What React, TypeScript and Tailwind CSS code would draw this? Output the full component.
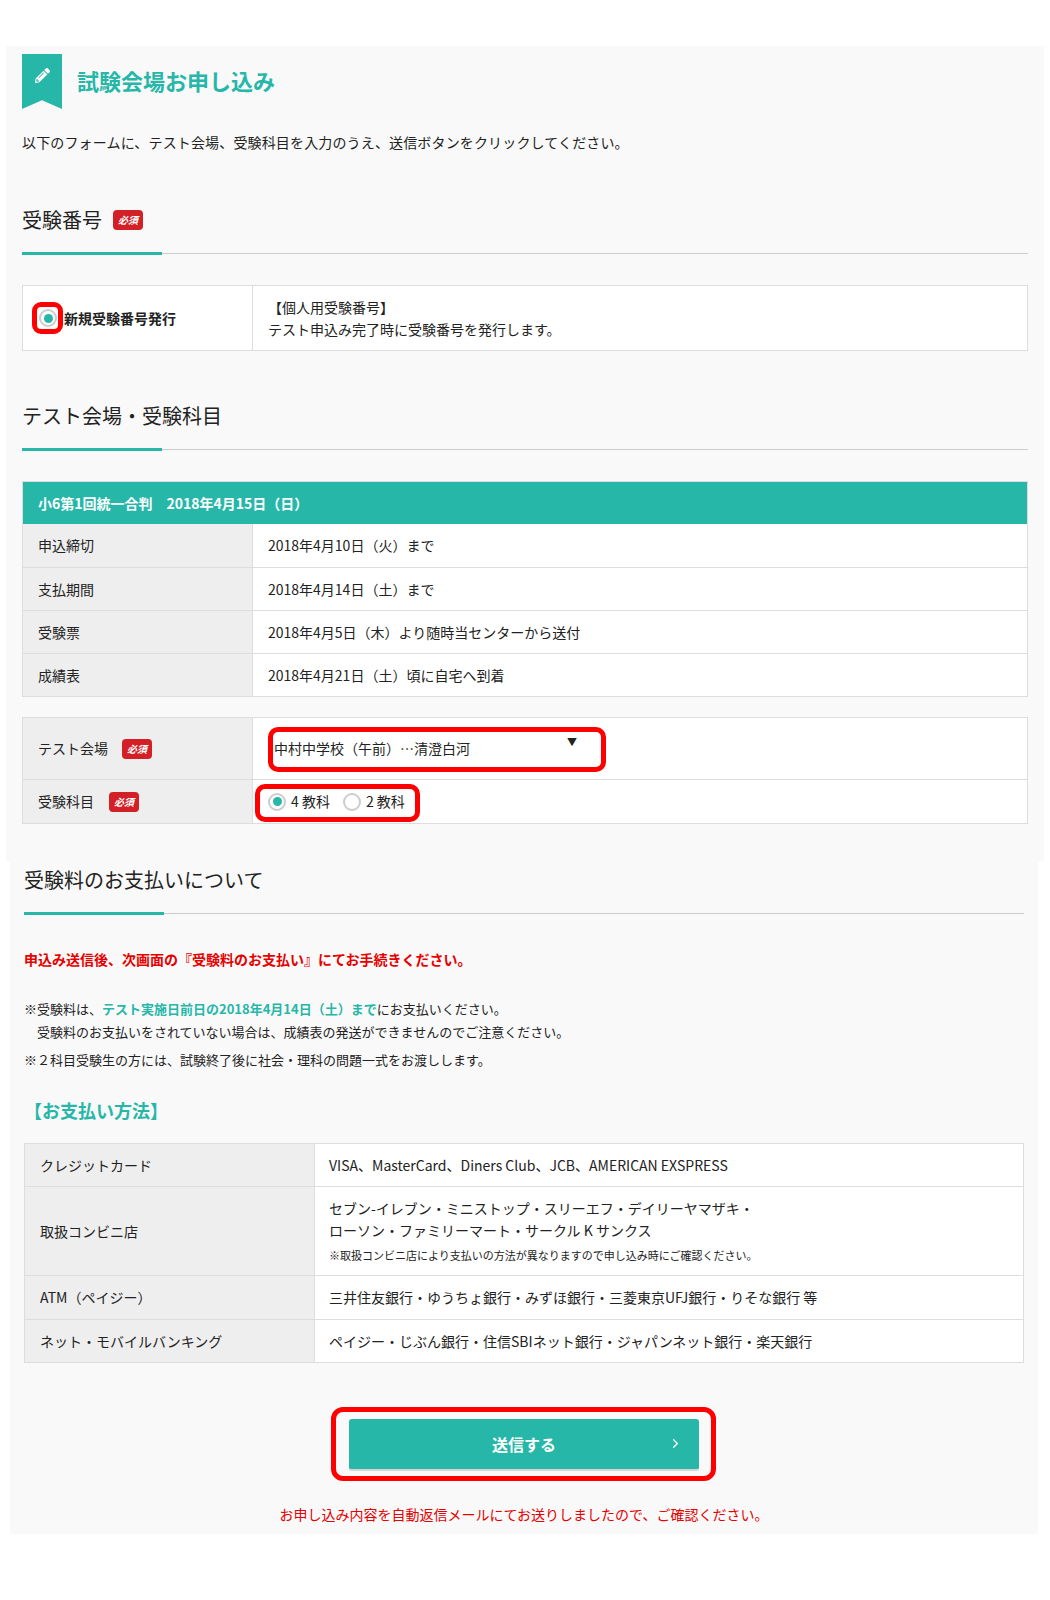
import React from 'react';
import { FaPencilAlt } from 'react-icons/fa';
import { ChevronRight } from 'lucide-react';

const Required: React.FC<{ className?: string }> = ({ className = '' }) => (
    <span className={`inline-flex h-5 w-[30px] items-center justify-center rounded-sm bg-[#d32027] text-[10px] font-bold italic leading-none text-white ${className}`}>
        必須
    </span>
);

const SectionHeading: React.FC<{ title: string; badge?: boolean }> = ({ title, badge }) => (
    <div>
        <div className="flex h-[30px] items-center">
            <h2 className="text-[20px] font-normal leading-[30px] text-[#222]">{title}</h2>
            {badge && <Required className="ml-[11px]" />}
        </div>
        <div className="mt-[17px] flex items-center">
            <div className="h-[3px] w-[140px] bg-[#26b7a9]" />
            <div className="h-px flex-1 bg-[#ccc]" />
        </div>
    </div>
);

const Radio: React.FC<{ checked?: boolean }> = ({ checked }) => (
    <span className="flex h-[18px] w-[18px] shrink-0 items-center justify-center rounded-full border-2 border-[#ccc] bg-white">
        {checked && <span className="h-[9px] w-[9px] rounded-full bg-[#26b7a9]" />}
    </span>
);

const Row: React.FC<{ label: React.ReactNode; height: string; children: React.ReactNode; first?: boolean }> = ({ label, height, children, first }) => (
    <div className={`grid grid-cols-[230px_1fr] ${height} ${first ? '' : 'border-t border-[#ddd]'}`}>
        <div className="flex items-center border-r border-[#ddd] bg-[#eee] pl-[15px]">{label}</div>
        <div className="flex items-center bg-white pl-[15px]">{children}</div>
    </div>
);

const PayRow: React.FC<{ label: string; height: string; children: React.ReactNode; first?: boolean }> = ({ label, height, children, first }) => (
    <div className={`grid grid-cols-[290px_1fr] ${height} ${first ? '' : 'border-t border-[#ddd]'}`}>
        <div className="flex items-center border-r border-[#ddd] bg-[#eee] pl-[15px]">{label}</div>
        <div className="flex items-center bg-white pl-[14px]">{children}</div>
    </div>
);

const scheduleRows = [
    { label: '申込締切', value: '2018年4月10日（火）まで' },
    { label: '支払期間', value: '2018年4月14日（土）まで' },
    { label: '受験票', value: '2018年4月5日（木）より随時当センターから送付' },
    { label: '成績表', value: '2018年4月21日（土）頃に自宅へ到着' },
];

const App: React.FC = () => {
    return (
        <div className="min-h-[1600px] bg-white pt-[46px] text-[14px] text-[#222]" style={{ fontFamily: '"Noto Sans CJK JP", "Noto Sans", sans-serif' }}>
            {/* first panel */}
            <section className="ml-[6px] h-[815px] w-[1038px] bg-[#f9f9f9] px-4 pt-2">
                <div className="flex items-start">
                    <div className="relative flex h-[55px] w-10 justify-center bg-[#26b7a9] pt-[14px] [clip-path:polygon(0_0,100%_0,100%_100%,50%_84%,0_100%)]">
                        <FaPencilAlt className="text-white" size={15} />
                    </div>
                    <h1 className="ml-[15px] mt-[9px] text-[22px] font-bold leading-[34px] text-[#26b7a9]">試験会場お申し込み</h1>
                </div>
                <p className="mt-[22px] leading-[22px] tracking-[0.15px]">以下のフォームに、テスト会場、受験科目を入力のうえ、送信ボタンをクリックしてください。</p>

                <div className="mt-[52px]">
                    <SectionHeading title="受験番号" badge />
                </div>
                <div className="mt-[30px] grid h-[66px] grid-cols-[230px_1fr] border border-[#ddd] bg-white">
                    <div className="relative flex items-center border-r border-[#ddd] pl-[16px] font-bold">
                        <Radio checked />
                        <span className="ml-[7px]">新規受験番号発行</span>
                        <span className="absolute left-[9px] top-[16px] h-[32px] w-[31px] rounded-[9px] border-[5px] border-[#ff0000]" />
                    </div>
                    <div className="flex flex-col justify-center pl-[15px] leading-[22px]">
                        <p>【個人用受験番号】</p>
                        <p>テスト申込み完了時に受験番号を発行します。</p>
                    </div>
                </div>

                <div className="mt-[50px]">
                    <SectionHeading title="テスト会場・受験科目" />
                </div>
                <div className="mt-[30px] border border-[#ddd]">
                    <div className="flex h-[42px] items-center bg-[#26b7a9] pl-[15px] font-bold text-white">小6第1回統一合判　2018年4月15日（日）</div>
                    {scheduleRows.map((row, i) => (
                        <Row key={row.label} label={row.label} height="h-[43px]" first={i === 0}>
                            {row.value}
                        </Row>
                    ))}
                </div>
                <div className="mt-5 border border-[#ddd]">
                    <Row
                        first
                        height="h-[61px]"
                        label={
                            <>
                                <span>テスト会場</span>
                                <Required className="ml-[14px]" />
                            </>
                        }
                    >
                        <div className="relative flex h-full w-[326px] items-center pl-[6px]">
                            <span>中村中学校（午前）…清澄白河</span>
                            <span className="absolute right-[17px] top-[19px] text-[10px] leading-none">▼</span>
                            <span className="absolute -left-0 top-[9px] h-[45px] w-[338px] rounded-[10px] border-[5px] border-[#ff0000]" />
                        </div>
                    </Row>
                    <Row
                        height="h-[44px]"
                        label={
                            <>
                                <span>受験科目</span>
                                <Required className="ml-[15px]" />
                            </>
                        }
                    >
                        <div className="relative flex h-full items-center">
                            <Radio checked />
                            <span className="ml-[5px]">4 教科</span>
                            <span className="ml-[13px]"><Radio /></span>
                            <span className="ml-[5px]">2 教科</span>
                            <span className="absolute left-[-13px] top-[4px] h-[38px] w-[165px] rounded-[10px] border-[5px] border-[#ff0000]" />
                        </div>
                    </Row>
                </div>
            </section>

            {/* second panel */}
            <section className="ml-[10px] h-[673px] w-[1028px] bg-[#f9f9f9] px-[14px] pt-[4px]">
                <SectionHeading title="受験料のお支払いについて" />
                <p className="mt-[33px] font-bold leading-[22px] text-[#e60000]">申込み送信後、次画面の『受験料のお支払い』にてお手続きください。</p>
                <div className="mt-[27px] text-[13px] leading-[23px]">
                    <p>※受験料は、<span className="font-bold text-[#26b7a9]">テスト実施日前日の2018年4月14日（土）まで</span>にお支払いください。</p>
                    <p className="pl-[13px]">受験料のお支払いをされていない場合は、成績表の発送ができませんのでご注意ください。</p>
                    <p className="mt-[5px]">※２科目受験生の方には、試験終了後に社会・理科の問題一式をお渡しします。</p>
                </div>
                <h3 className="mt-[24px] text-[18px] font-bold leading-[30px] text-[#26b7a9]">【お支払い方法】</h3>
                <div className="mt-[18px] border border-[#ddd]">
                    <PayRow first label="クレジットカード" height="h-[42px]">VISA、MasterCard、Diners Club、JCB、AMERICAN EXSPRESS</PayRow>
                    <PayRow label="取扱コンビニ店" height="h-[89px]">
                        <div className="leading-[22px]">
                            <p>セブン-イレブン・ミニストップ・スリーエフ・デイリーヤマザキ・</p>
                            <p>ローソン・ファミリーマート・サークル K サンクス</p>
                            <p className="mt-[3px] text-[11px]">※取扱コンビニ店により支払いの方法が異なりますので申し込み時にご確認ください。</p>
                        </div>
                    </PayRow>
                    <PayRow label="ATM（ペイジー）" height="h-[44px]">三井住友銀行・ゆうちょ銀行・みずほ銀行・三菱東京UFJ銀行・りそな銀行 等</PayRow>
                    <PayRow label="ネット・モバイルバンキング" height="h-[43px]">ペイジー・じぶん銀行・住信SBIネット銀行・ジャパンネット銀行・楽天銀行</PayRow>
                </div>
                <div className="mt-[56px] flex justify-center">
                    <div className="relative -translate-x-[-0px]">
                        <button className="relative flex h-[52px] w-[350px] items-center justify-center rounded-[3px] border-b-2 border-[#d5d5d5] bg-[#26b7a9] text-[16px] font-bold text-white">
                            送信する
                            <ChevronRight className="absolute right-[16px] top-[17px]" size={15} />
                        </button>
                        <span className="absolute left-[-18px] top-[-12px] h-[74px] w-[385px] rounded-[12px] border-[5px] border-[#ff0000]" />
                    </div>
                </div>
                <p className="mt-[32px] text-center leading-[22px] text-[#e60000]">お申し込み内容を自動返信メールにてお送りしましたので、ご確認ください。</p>
            </section>
        </div>
    );
};

export default App;
